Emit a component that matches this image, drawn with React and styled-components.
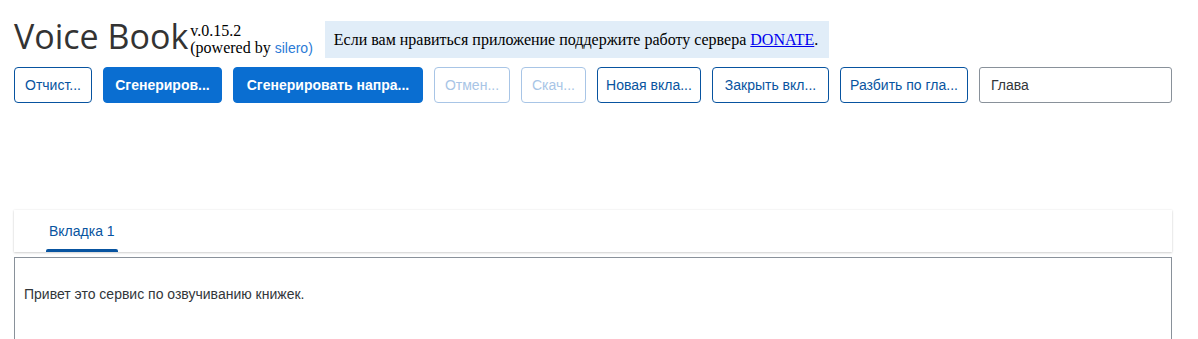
import React from 'react';
import styled, { createGlobalStyle } from 'styled-components';

const GlobalStyle = createGlobalStyle`
  body {
    margin: 0;
    background: #ffffff;
    font-family: "Liberation Sans", Arial, sans-serif;
  }
`;

const Page = styled.div`
  padding: 16px 26px 0 14px;
`;

const Header = styled.div`
  display: flex;
  align-items: flex-start;
`;

const Title = styled.h1`
  margin: 0;
  font-family: "Open Sans", sans-serif;
  font-weight: 400;
  font-size: 34px;
  line-height: 40px;
  color: #333333;
`;

const Version = styled.div`
  margin: 6px 0 0 2px;
  font-family: "Liberation Serif", serif;
  font-size: 16px;
  line-height: 17px;
  color: #000000;
`;

const Silero = styled.span`
  font-family: "Liberation Sans", sans-serif;
  font-size: 14px;
  color: #2b7bd6;
`;

const Donate = styled.div`
  margin: 5px 0 0 12px;
  padding: 10px 11px 10px 9px;
  background: #e1edf8;
  font-family: "Liberation Serif", serif;
  font-size: 16px;
  line-height: 17px;
  color: #000000;

  a {
    color: #0000ee;
    text-decoration: underline;
  }
`;

const Toolbar = styled.div`
  display: flex;
  gap: 11px;
  margin-top: 9px;
`;

const Button = styled.button`
  box-sizing: border-box;
  width: ${(p) => p.w}px;
  height: 36px;
  padding: 0 8px;
  border-radius: 4px;
  font-family: "Liberation Sans", sans-serif;
  font-size: 14px;
  white-space: nowrap;
  overflow: hidden;
  cursor: pointer;
  border: 1px solid ${(p) => (p.primary ? '#0a6ed1' : p.disabled ? '#a8c5e6' : '#0854a0')};
  background: ${(p) => (p.primary ? '#0a6ed1' : '#ffffff')};
  color: ${(p) => (p.primary ? '#ffffff' : p.disabled ? '#a8c5e6' : '#0854a0')};
  font-weight: ${(p) => (p.primary ? 700 : 400)};
`;

const Input = styled.div`
  box-sizing: border-box;
  flex: 1;
  height: 36px;
  padding: 0 11px;
  display: flex;
  align-items: center;
  border: 1px solid #89919a;
  border-radius: 3px;
  font-size: 14px;
  color: #32363a;
`;

const TabBar = styled.div`
  margin-top: 107px;
  height: 42px;
  padding-left: 32px;
  display: flex;
  background: #ffffff;
  box-shadow: 0 0 2px rgba(0, 0, 0, 0.08), 0 1px 2px rgba(0, 0, 0, 0.16);
`;

const Tab = styled.div`
  position: relative;
  padding: 0 3px;
  display: flex;
  align-items: center;
  font-size: 14px;
  color: #0854a0;

  &::after {
    content: '';
    position: absolute;
    left: 0;
    right: 0;
    bottom: 0;
    height: 3px;
    border-radius: 2px 2px 0 0;
    background: ${(p) => (p.active ? '#0854a0' : 'transparent')};
  }
`;

const TextArea = styled.div`
  margin-top: 5px;
  height: 120px;
  box-sizing: border-box;
  padding: 28px 9px 0;
  border: 1px solid #89919a;
  font-size: 14px;
  line-height: 16px;
  color: #32363a;
`;

const buttons = [
  { label: 'Отчист...', w: 78 },
  { label: 'Сгенериров...', w: 119, primary: true },
  { label: 'Сгенерировать напра...', w: 190, primary: true },
  { label: 'Отмен...', w: 76, disabled: true },
  { label: 'Скач...', w: 65, disabled: true },
  { label: 'Новая вкла...', w: 104 },
  { label: 'Закрыть вкл...', w: 117 },
  { label: 'Разбить по гла...', w: 128 },
];

const App = () => {
  return (
    <>
      <GlobalStyle />
      <Page>
        <Header>
          <Title>Voice Book</Title>
          <Version>
            v.0.15.2
            <br />
            (powered by <Silero>silero)</Silero>
          </Version>
          <Donate>
            Если вам нравиться приложение поддержите работу сервера <a href="#donate">DONATE</a>.
          </Donate>
        </Header>
        <Toolbar>
          {buttons.map((b) => (
            <Button key={b.label} w={b.w} primary={b.primary} disabled={b.disabled}>
              {b.label}
            </Button>
          ))}
          <Input>Глава</Input>
        </Toolbar>
        <TabBar>
          <Tab active>Вкладка 1</Tab>
        </TabBar>
        <TextArea>Привет это сервис по озвучиванию книжек.</TextArea>
      </Page>
    </>
  );
};

export default App;
